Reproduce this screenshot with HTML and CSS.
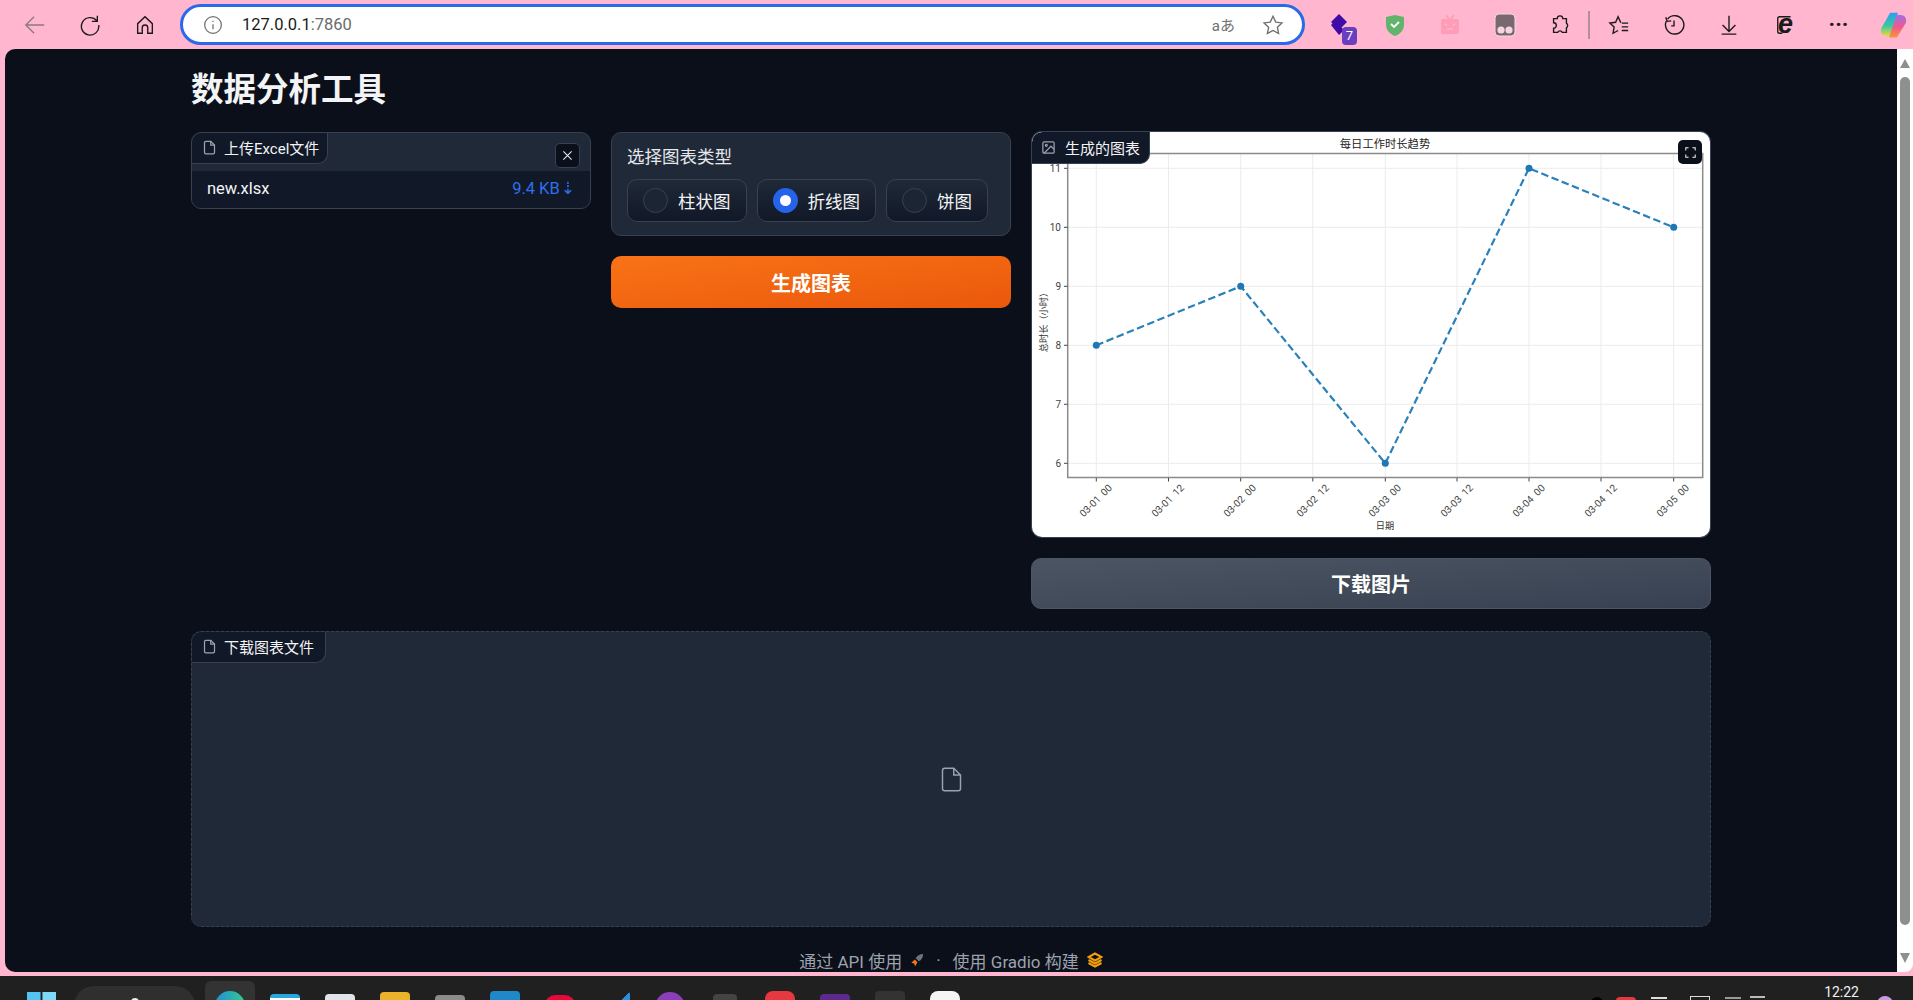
FILE: index.html
```html
<!DOCTYPE html>
<html lang="en">
<head>
  <meta charset="UTF-8">
  <meta name="viewport" content="width=device-width, initial-scale=1.0">
  <title>数据分析工具</title>
  <link rel="stylesheet" href="styles.css">
</head>
<body>

  <!-- Browser toolbar -->
  <header class="toolbar">
    <div class="tool-btn"><svg class="ico ico-faded" viewBox="0 0 24 24"><path d="M22 12H2M11 3l-9 9 9 9"/></svg></div>
    <div class="tool-btn"><svg class="ico" viewBox="0 0 24 24"><path d="M19.500 7.500A9.500 9.500 0 1 0 21.500 12M20 2v6h-6"/></svg></div>
    <div class="tool-btn"><svg class="ico" viewBox="0 0 24 24"><path d="M4 21V10.500L12 3l8 7.500V21h-5v-6a3 3 0 0 0-6 0v6z"/></svg></div>
    <div class="address-bar">
      <svg class="ico ico-grey info-ico" viewBox="0 0 24 24"><circle cx="12" cy="12" r="10"/><path d="M12 11v6M12 7v1.500"/></svg>
      <span class="url">127.0.0.1<span class="url-port">:7860</span></span>
      <span class="translate">aあ</span>
      <svg class="ico ico-grey star-ico" viewBox="0 0 24 24"><path d="M12 2.500l3 6.300 6.800.9-5 4.800 1.300 6.800-6.100-3.300-6.100 3.300 1.300-6.800-5-4.800 6.800-.9z"/></svg>
    </div>
    <div class="tool-btn badge-wrap">
      <svg class="ext-ico" viewBox="0 0 24 24"><path fill="#3f0aa8" d="M11 1l8 8-8 8-8-8z"/><path fill="#3f0aa8" d="M3 12l2-2 6 6 2-2 3 3-5 5z"/></svg>
      <span class="badge">7</span>
    </div>
    <div class="tool-btn"><svg class="ext-ico" viewBox="0 0 24 24"><path fill="#62b36b" d="M3 4l9-2 9 2v8c0 5-4 9-9 11-5-2-9-6-9-11z"/><path fill="none" stroke="#fff" stroke-width="1.800" d="M8 11l3 3 5-5"/></svg></div>
    <div class="tool-btn"><svg class="ext-ico" viewBox="0 0 24 24"><path fill="none" stroke="#ff9db8" stroke-width="1.600" d="M8 2l3 4M16 2l-3 4"/><rect x="3" y="6" width="18" height="15" rx="2" fill="#ff9db8"/><path fill="none" stroke="#ffb6ce" stroke-width="1.600" d="M7 11l2 1M17 11l-2 1M9 16h6"/></svg></div>
    <div class="tool-btn"><svg class="ext-ico" viewBox="0 0 24 24"><rect x="2" y="1" width="20" height="22" rx="4" fill="#77696f" stroke="#f3dbe3"/><circle cx="8" cy="17" r="3.600" fill="#f7d5e0"/><circle cx="16" cy="17" r="3.600" fill="#f7d5e0"/></svg></div>
    <div class="tool-btn"><svg class="ico" viewBox="0 0 24 24"><path d="M9 5a3 3 0 0 1 6 0h4v5a3 3 0 0 1 0 5v5h-4.500a2.800 2.800 0 0 0-5 0H5v-4.500a3 3 0 0 0 0-6V5z"/></svg></div>
    <span class="tool-divider"></span>
    <div class="tool-btn"><svg class="ico" viewBox="0 0 24 24"><path d="M14 9.500L11 3 8.300 9 2 9.800l4.700 4.400L5.500 21l5.500-3M15 10h7M15 14h7M15 18h7"/></svg></div>
    <div class="tool-btn"><svg class="ico" viewBox="0 0 24 24"><path d="M5 5.500A10 10 0 1 1 3.500 8M3 3.500l1.500 4.500 4.500-.5M12 7v6h-3"/></svg></div>
    <div class="tool-btn"><svg class="ico" viewBox="0 0 24 24"><path d="M12 2v16M5 12l7 7 7-7M4 22h16"/></svg></div>
    <div class="tool-btn ie-btn">
      <svg class="ico" viewBox="0 0 24 24"><path d="M8 21H5a2 2 0 0 1-2-2V5a2 2 0 0 1 2-2h12"/></svg>
      <span class="ie-letter">e</span>
    </div>
    <div class="tool-btn dots">···</div>
    <div class="tool-btn">
      <svg class="copilot" viewBox="0 0 24 24">
        <defs>
          <linearGradient id="copA" x1="0" y1="0" x2="0" y2="1"><stop offset="0" stop-color="#2c9df0"/><stop offset=".55" stop-color="#35c9a0"/><stop offset="1" stop-color="#f2d63f"/></linearGradient>
          <linearGradient id="copB" x1="0" y1="0" x2="0" y2="1"><stop offset="0" stop-color="#a56be8"/><stop offset=".55" stop-color="#ee5a8c"/><stop offset="1" stop-color="#f9953a"/></linearGradient>
        </defs>
        <path fill="url(#copA)" d="M9 1h7l-4 12-3 9H6C2 22 0 19 1 15z"/>
        <path fill="url(#copB)" d="M15 23H8l4-12 3-8h3c4 0 6 3 5 7z"/>
      </svg>
    </div>
  </header>

  <div class="viewport">
    <div class="page">
      <main class="app">
        <h1 class="app-title">数据分析工具</h1>

        <div class="app-row">
          <!-- Upload -->
          <section class="panel upload-panel">
            <div class="upload-head">
              <span class="tab-label">
                <svg class="label-ico" viewBox="0 0 24 24"><path d="M14 2H6a2 2 0 0 0-2 2v16a2 2 0 0 0 2 2h12a2 2 0 0 0 2-2V8z"/><path d="M14 2v6h6"/></svg>
                上传Excel文件
              </span>
              <button class="close-btn" type="button"><svg viewBox="0 0 12 12"><path d="M1.500 1.500l9 9M10.500 1.500l-9 9"/></svg></button>
            </div>
            <div class="file-row">
              <span>new.xlsx</span>
              <span class="file-size">9.4 KB<span class="file-arrow">⇣</span></span>
            </div>
          </section>

          <!-- Chart type -->
          <div class="col">
            <section class="panel radio-panel">
              <div class="radio-title">选择图表类型</div>
              <div class="radio-group">
                <label class="radio-opt"><span class="radio-dot"></span>柱状图</label>
                <label class="radio-opt"><span class="radio-dot is-checked"></span>折线图</label>
                <label class="radio-opt"><span class="radio-dot"></span>饼图</label>
              </div>
            </section>
            <button class="big-btn btn-primary" type="button">生成图表</button>
          </div>

          <!-- Chart -->
          <div class="col col-chart">
            <section class="chart-card">
              <span class="tab-label chart-label">
                <svg class="label-ico" viewBox="0 0 24 24"><rect x="3" y="3" width="18" height="18" rx="2"/><circle cx="8.500" cy="8.500" r="1.500"/><path d="M21 15l-5-5L5 21"/></svg>
                生成的图表
              </span>
              <button class="expand-btn" type="button"><svg viewBox="0 0 14 14"><path d="M1 4.500V1h3.500M9.500 1H13v3.500M13 9.500V13H9.500M4.500 13H1V9.500"/></svg></button>

              <svg class="chart" viewBox="1032 132 678 405">
                <g class="grid">
                  <path d="M1096.300 153.500V477.500M1168.500 153.500V477.500M1240.700 153.500V477.500M1312.800 153.500V477.500M1385.300 153.500V477.500M1457 153.500V477.500M1529 153.500V477.500M1601 153.500V477.500M1673.700 153.500V477.500"/>
                  <path d="M1068 168.300H1702M1068 227.300H1702M1068 286.300H1702M1068 345.300H1702M1068 404.300H1702M1068 463.300H1702"/>
                </g>
                <rect class="spines" x="1067.700" y="153.500" width="635" height="324"/>
                <g class="ticks">
                  <path d="M1064 168.300h3.500M1064 227.300h3.500M1064 286.300h3.500M1064 345.300h3.500M1064 404.300h3.500M1064 463.300h3.500"/>
                  <path d="M1096.300 478v3.500M1168.500 478v3.500M1240.700 478v3.500M1312.800 478v3.500M1385.300 478v3.500M1457 478v3.500M1529 478v3.500M1601 478v3.500M1673.700 478v3.500"/>
                </g>
                <polyline class="series" points="1096.300,345.300 1240.700,286.300 1385.300,463.300 1529,168.300 1673.700,227.300"/>
                <g class="points">
                  <circle cx="1096.300" cy="345.300" r="3.500"/>
                  <circle cx="1240.700" cy="286.300" r="3.500"/>
                  <circle cx="1385.300" cy="463.300" r="3.500"/>
                  <circle cx="1529" cy="168.300" r="3.500"/>
                  <circle cx="1673.700" cy="227.300" r="3.500"/>
                </g>
                <text class="chart-title" x="1385" y="148">每日工作时长趋势</text>
                <g class="y-labels">
                  <text x="1061" y="171.500">11</text>
                  <text x="1061" y="230.500">10</text>
                  <text x="1061" y="289.500">9</text>
                  <text x="1061" y="348.500">8</text>
                  <text x="1061" y="407.500">7</text>
                  <text x="1061" y="466.500">6</text>
                </g>
                <g class="x-labels">
                  <text x="1096" y="504" transform="rotate(-45 1096 501)">03-01 00</text>
                  <text x="1168" y="504" transform="rotate(-45 1168 501)">03-01 12</text>
                  <text x="1240" y="504" transform="rotate(-45 1240 501)">03-02 00</text>
                  <text x="1313" y="504" transform="rotate(-45 1313 501)">03-02 12</text>
                  <text x="1385" y="504" transform="rotate(-45 1385 501)">03-03 00</text>
                  <text x="1457" y="504" transform="rotate(-45 1457 501)">03-03 12</text>
                  <text x="1529" y="504" transform="rotate(-45 1529 501)">03-04 00</text>
                  <text x="1601" y="504" transform="rotate(-45 1601 501)">03-04 12</text>
                  <text x="1673" y="504" transform="rotate(-45 1673 501)">03-05 00</text>
                </g>
                <text class="axis-name" x="1385" y="529">日期</text>
                <text class="axis-name" x="1047" y="320" transform="rotate(-90 1047 320)">总时长（小时）</text>
              </svg>
            </section>
            <button class="big-btn btn-secondary" type="button">下载图片</button>
          </div>
        </div>

        <!-- Download file -->
        <section class="download-panel">
          <span class="tab-label">
            <svg class="label-ico" viewBox="0 0 24 24"><path d="M14 2H6a2 2 0 0 0-2 2v16a2 2 0 0 0 2 2h12a2 2 0 0 0 2-2V8z"/><path d="M14 2v6h6"/></svg>
            下载图表文件
          </span>
          <div class="empty-file">
            <svg viewBox="0 0 24 24"><path d="M14 2H6a2 2 0 0 0-2 2v16a2 2 0 0 0 2 2h12a2 2 0 0 0 2-2V8z"/><path d="M14 2v6h6"/></svg>
          </div>
        </section>

        <footer class="app-footer">
          <span>通过 API 使用</span>
          <svg class="rocket" viewBox="0 0 16 16"><path fill="#6b7280" d="M15 1c-4 0-7 2-8.500 5L10 9.500C13 8 15 5 15 1z"/><path fill="#f97316" d="M5.500 7.500L8.500 10.500 6 15 4.500 12 1.500 11z"/></svg>
          <span class="footer-sep">·</span>
          <span>使用 Gradio 构建</span>
          <svg class="gradio-logo" viewBox="0 0 16 16"><path d="M8 1.500L14.500 5 8 8.500 1.500 5zM1.500 8L8 11.500 14.500 8M1.500 11L8 14.500 14.500 11"/></svg>
        </footer>
      </main>
    </div>

    <div class="scrollbar">
      <span class="arrow-up"></span>
      <span class="thumb"></span>
      <span class="arrow-down"></span>
    </div>
  </div>

  <!-- Taskbar, cut off by the bottom of the window -->
  <footer class="taskbar">
    <svg class="start" viewBox="0 0 30 30"><rect width="14" height="14" fill="#54c5f2"/><rect x="16" width="14" height="14" fill="#7fd8f7"/><rect y="16" width="14" height="14" fill="#2ea6e0"/><rect x="16" y="16" width="14" height="14" fill="#54c5f2"/></svg>
    <div class="search-pill"><span class="search-dot"></span></div>
    <div class="task-active">
      <span class="task-ico ico-edge"></span>
    </div>
    <div class="task-icons">
      <span class="task-ico ico-store"></span>
      <span class="task-ico ico-note"></span>
      <span class="task-ico ico-folder"></span>
      <span class="task-ico ico-files"></span>
      <span class="task-ico ico-blue"></span>
      <span class="task-ico ico-red"></span>
      <span class="task-ico ico-vscode"></span>
      <span class="task-ico ico-purple"></span>
      <span class="task-ico ico-dark"></span>
      <span class="task-ico ico-wps"></span>
      <span class="task-ico ico-violet"></span>
      <span class="task-ico ico-game"></span>
      <span class="task-ico ico-white"></span>
    </div>
    <div class="tray">
      <span class="tray-ico tray-black"></span>
      <span class="tray-ico tray-red"></span>
      <span class="tray-ico tray-plus"></span>
      <span class="tray-ico tray-box"></span>
      <span class="tray-ico tray-wifi"></span>
      <span class="tray-ico tray-vol"></span>
      <span class="clock">12:22</span>
      <span class="tray-ico tray-user"></span>
    </div>
  </footer>

</body>
</html>
```

FILE: styles.css
```css
* {
  box-sizing: border-box;
}

html, body {
  height: 100%;
}

body {
  margin: 0;
  display: flex;
  flex-direction: column;
  height: 1000px;
  overflow: hidden;
  background-color: #ffb6ce;
  font-family: Roboto, "Noto Sans CJK SC", sans-serif;
  color: #f3f4f6;
}

/* ---------- browser toolbar ---------- */
.toolbar {
  display: flex;
  align-items: center;
  flex: none;
  height: 49px;
  padding-left: 7px;
  background-color: #ffb6ce;
}

.tool-btn {
  display: flex;
  align-items: center;
  justify-content: center;
  position: relative;
  flex: none;
  width: 55px;
  height: 44px;
}

.ico {
  width: 22px;
  height: 22px;
  fill: none;
  stroke: #1a1a1a;
  stroke-width: 1.5;
}

.ico-faded {
  stroke: #8d7a82;
}

.ico-grey {
  stroke: #6f6f6f;
}

.address-bar {
  display: flex;
  align-items: center;
  flex: none;
  width: 1125px;
  height: 41px;
  margin: 0 7px 0 8px;
  padding: 0 18px 0 20px;
  background-color: #fff;
  border: 3px solid #2a6ae9;
  border-radius: 21px;
}

.info-ico {
  width: 20px;
  height: 20px;
}

.url {
  margin-left: 19px;
  font-size: 16.500px;
  color: #1a1a1a;
}

.url-port {
  color: #6b6b6b;
}

.translate {
  margin-left: auto;
  font-size: 15px;
  color: #6f6f6f;
}

.star-ico {
  margin-left: 27px;
}

.ext-ico {
  width: 24px;
  height: 24px;
}

.badge {
  position: absolute;
  left: 30px;
  top: 24px;
  width: 15px;
  height: 18px;
  border-radius: 4px;
  background-color: #6a3ec0;
  color: #fff;
  font-size: 13px;
  line-height: 18px;
  text-align: center;
}

.tool-divider {
  flex: none;
  width: 2px;
  height: 28px;
  margin: 0 1px;
  background-color: #b18f9b;
}

.ie-btn {
  left: 2px;
}

.ie-letter {
  position: absolute;
  left: 20px;
  top: 4px;
  font-family: "Liberation Sans", sans-serif;
  font-size: 27px;
  font-weight: bold;
  font-style: italic;
  line-height: 34px;
  color: #1a1a1a;
}

.dots {
  font-size: 22px;
  font-weight: bold;
  color: #1a1a1a;
}

.copilot {
  width: 27px;
  height: 30px;
}

/* ---------- page area ---------- */
.viewport {
  display: flex;
  flex: none;
  height: 923px;
  padding-left: 5px;
}

.page {
  flex: 1;
  background-color: #0b0f19;
  border-radius: 10px 0 0 10px;
  overflow: hidden;
}

.scrollbar {
  display: flex;
  flex-direction: column;
  align-items: center;
  flex: none;
  width: 16px;
  padding: 10px 0 9px;
  background-color: #fff;
  border-radius: 0 0 8px 0;
}

.arrow-up, .arrow-down {
  flex: none;
  width: 0;
  height: 0;
  border-left: 5px solid transparent;
  border-right: 5px solid transparent;
}

.arrow-up {
  border-bottom: 9px solid #8f8f8f;
}

.arrow-down {
  border-top: 10px solid #8f8f8f;
}

.thumb {
  flex: 1;
  width: 10px;
  margin: 9px 0 28px;
  background-color: #8f8f8f;
  border-radius: 5px;
}

.app {
  width: 1520px;
  margin: 0 auto;
  padding-top: 16px;
}

.app-title {
  margin: 0 0 18px;
  padding-top: 1px;
  font-size: 32.500px;
  line-height: 48px;
  font-weight: bold;
}

.app-row {
  display: grid;
  grid-template-columns: 400px 400px 680px;
  gap: 20px;
  align-items: start;
}

.col {
  display: flex;
  flex-direction: column;
  gap: 20px;
}

.col-chart {
  gap: 21px;
}

.panel {
  background-color: #1f2937;
  border: 1px solid #374151;
  border-radius: 10px;
}

.tab-label {
  display: inline-flex;
  align-items: center;
  gap: 7px;
  height: 31px;
  padding: 0 8px 2px 10px;
  background-color: #111827;
  border-right: 1px solid #374151;
  border-bottom: 1px solid #374151;
  border-radius: 10px 0 10px 0;
  font-size: 15px;
  color: #f3f4f6;
}

.label-ico {
  width: 15px;
  height: 15px;
  fill: none;
  stroke: #9ca3af;
  stroke-width: 2;
}

/* upload */
.upload-panel {
  overflow: hidden;
  height: 77px;
}

.upload-head {
  display: flex;
  justify-content: space-between;
  align-items: flex-start;
  height: 38px;
}

.close-btn {
  display: flex;
  align-items: center;
  justify-content: center;
  width: 25px;
  height: 25px;
  margin: 10px 10px 0 0;
  padding: 0;
  background-color: #0b0f19;
  border: 1px solid #374151;
  border-radius: 5px;
}

.close-btn svg {
  width: 11px;
  height: 11px;
  fill: none;
  stroke: #e5e7eb;
  stroke-width: 1.2;
}

.file-row {
  display: flex;
  align-items: center;
  justify-content: space-between;
  height: 37px;
  padding: 0 15px 3px;
  background-color: #111827;
  font-size: 16.500px;
}

.file-size {
  color: #2f6fed;
}

.file-arrow {
  margin-left: 1px;
  font-family: "DejaVu Sans", sans-serif;
  font-size: 17px;
}

/* radios */
.radio-panel {
  height: 104px;
  padding: 14px 15px 0;
}

.radio-title {
  font-size: 17.500px;
  line-height: 20px;
  margin-bottom: 12px;
  color: #e5e7eb;
}

.radio-group {
  display: flex;
  gap: 10px;
}

.radio-opt {
  display: flex;
  align-items: center;
  gap: 10px;
  height: 43px;
  padding: 0 15px;
  background: linear-gradient(to bottom, #1f2937, #111827);
  border: 1px solid #374151;
  border-radius: 10px;
  font-size: 17.500px;
  color: #f3f4f6;
}

.radio-dot {
  flex: none;
  width: 25px;
  height: 25px;
  border: 1px solid #374151;
  border-radius: 50%;
  background-color: #1c2534;
}

.radio-dot.is-checked {
  border: 7.500px solid #2563eb;
  background-color: #fff;
}

/* buttons */
.big-btn {
  display: block;
  width: 100%;
  height: 52px;
  padding: 0;
  font-family: inherit;
  font-size: 20px;
  font-weight: bold;
  color: #fff;
  border-radius: 10px;
  cursor: pointer;
}

.btn-primary {
  background: linear-gradient(to bottom right, #f97316, #ea580c);
  border: none;
}

.btn-secondary {
  height: 51px;
  background: linear-gradient(to bottom right, #4b5563, #374151);
  border: 1px solid #4b5563;
}

/* chart */
.chart-card {
  position: relative;
  height: 405px;
  margin: 0 1px;
  background-color: #fff;
  border-radius: 10px;
  box-shadow: 0 0 0 1px #374151;
  overflow: hidden;
}

.chart-label {
  position: absolute;
  left: 0;
  top: 0;
  gap: 9px;
  height: 32px;
  padding: 0 9px;
}

.expand-btn {
  display: flex;
  align-items: center;
  justify-content: center;
  position: absolute;
  top: 8px;
  right: 8px;
  width: 24px;
  height: 24px;
  padding: 0;
  background-color: #0b0f19;
  border: none;
  border-radius: 5px;
}

.expand-btn svg {
  width: 11px;
  height: 11px;
  fill: none;
  stroke: #f3f4f6;
  stroke-width: 1.3;
}

.chart {
  display: block;
  width: 678px;
  height: 405px;
  font-family: "Noto Sans CJK SC", sans-serif;
}

.grid path {
  fill: none;
  stroke: #ececec;
  stroke-width: 1;
}

.spines {
  fill: none;
  stroke: #8b8b8b;
  stroke-width: 1.5;
}

.ticks path {
  fill: none;
  stroke: #444;
  stroke-width: 1;
}

.series {
  fill: none;
  stroke: #2a80ba;
  stroke-width: 2.2;
  stroke-dasharray: 7.500 3.500;
}

.points circle {
  fill: #1f77b4;
}

.chart-title {
  font-size: 11.300px;
  text-anchor: middle;
  fill: #222;
}

.y-labels text {
  font-family: Roboto, sans-serif;
  font-size: 10px;
  text-anchor: end;
  fill: #444;
}

.x-labels text {
  font-family: Roboto, sans-serif;
  font-size: 10px;
  word-spacing: 2px;
  text-anchor: middle;
  fill: #444;
}

.axis-name {
  font-size: 9.200px;
  text-anchor: middle;
  fill: #333;
}

/* download file */
.download-panel {
  display: flex;
  flex-direction: column;
  height: 296px;
  margin-top: 22px;
  background-color: #1f2937;
  border: 1px dashed #374151;
  border-radius: 10px;
}

.download-panel .tab-label {
  align-self: flex-start;
  padding-right: 11px;
}

.empty-file {
  display: flex;
  align-items: center;
  justify-content: center;
  flex: 1;
  padding-bottom: 31px;
}

.empty-file svg {
  width: 27px;
  height: 27px;
  fill: none;
  stroke: #9ca3af;
  stroke-width: 1.3;
}

/* gradio footer */
.app-footer {
  display: flex;
  align-items: center;
  justify-content: center;
  gap: 8px;
  height: 24px;
  margin-top: 21px;
  font-size: 17px;
  color: #9ca3af;
}

.rocket {
  width: 14px;
  height: 14px;
}

.footer-sep {
  margin: 0 4px;
}

.gradio-logo {
  width: 16px;
  height: 16px;
  fill: none;
  stroke: #f59e0b;
  stroke-width: 2;
}

/* ---------- taskbar ---------- */
.taskbar {
  display: flex;
  flex: none;
  height: 24px;
  margin-top: 4px;
  padding-left: 27px;
  background-color: #202020;
  overflow: hidden;
}

.start {
  flex: none;
  width: 29px;
  height: 29px;
  margin-top: 16px;
}

.search-pill {
  flex: none;
  width: 121px;
  height: 40px;
  margin: 10px 0 0 18px;
  background-color: #2f2f2f;
  border-radius: 20px;
  text-align: center;
}

.search-dot {
  display: block;
  width: 8px;
  height: 8px;
  margin: 12px auto 0;
  border-radius: 50%;
  background-color: #f0f0f0;
}

.task-active {
  display: flex;
  justify-content: center;
  flex: none;
  width: 50px;
  height: 40px;
  margin: 5px 0 0 10px;
  padding-top: 10px;
  background-color: #333;
  border-radius: 6px;
}

.task-icons {
  display: flex;
  gap: 25px;
  flex: none;
  margin-left: 15px;
}

.task-ico {
  display: block;
  flex: none;
  width: 30px;
  height: 30px;
  margin-top: 16px;
  border-radius: 4px;
}

.ico-edge {
  margin-top: 0;
  border-radius: 50%;
  background: linear-gradient(to right, #1f8fd6, #35c98f);
}

.ico-store {
  background-color: #fff;
  border-top: 4px solid #29a8e0;
  margin-top: 18px;
}

.ico-note {
  background-color: #dfe4ea;
  margin-top: 18px;
}

.ico-folder {
  background-color: #eab32a;
}

.ico-files {
  background-color: #8b8b8b;
  margin-top: 19px;
}

.ico-blue {
  background: linear-gradient(to bottom, #1e88c9 50%, #e88a1a 50%);
  margin-top: 15px;
}

.ico-red {
  background-color: #e8093a;
  margin-top: 19px;
  border-radius: 10px 10px 0 0;
}

.ico-vscode {
  background: linear-gradient(135deg, #202020 50%, #2b8fe0 50%);
  margin-top: 15px;
}

.ico-purple {
  background-color: #8a3fb8;
  border-radius: 50%;
}

.ico-dark {
  width: 24px;
  background-color: #444;
  margin: 18px 3px 0;
}

.ico-wps {
  background-color: #e5383f;
  border-radius: 8px;
  margin-top: 15px;
}

.ico-violet {
  background-color: #5b2a8c;
  margin-top: 18px;
}

.ico-game {
  background-color: #333;
  margin-top: 15px;
}

.ico-white {
  background-color: #f5f5f5;
  margin-top: 15px;
  border-radius: 8px;
}

.tray {
  display: flex;
  align-items: flex-start;
  flex: none;
  margin-left: auto;
}

.tray-ico {
  display: block;
  flex: none;
}

.tray-black {
  width: 12px;
  height: 12px;
  margin-top: 21px;
  background-color: #000;
  border-radius: 50%;
}

.tray-red {
  width: 20px;
  height: 16px;
  margin: 21px 0 0 13px;
  background-color: #e5383f;
  border-radius: 4px;
}

.tray-plus {
  width: 16px;
  height: 2px;
  margin: 21px 0 0 15px;
  background-color: #ddd;
}

.tray-box {
  width: 20px;
  height: 18px;
  margin: 20px 0 0 23px;
  border: 1px solid #ddd;
}

.tray-wifi {
  width: 16px;
  height: 2px;
  margin: 21px 0 0 15px;
  background-color: #999;
}

.tray-vol {
  width: 15px;
  height: 10px;
  margin: 20px 0 0 9px;
  border-top: 2px solid #bbb;
}

.clock {
  margin: 9px 0 0 59px;
  font-size: 14px;
  line-height: 15px;
  color: #f0f0f0;
}

.tray-user {
  width: 16px;
  height: 16px;
  margin: 20px 20px 0 18px;
  background-color: #c89be0;
  border-radius: 50%;
}
```
